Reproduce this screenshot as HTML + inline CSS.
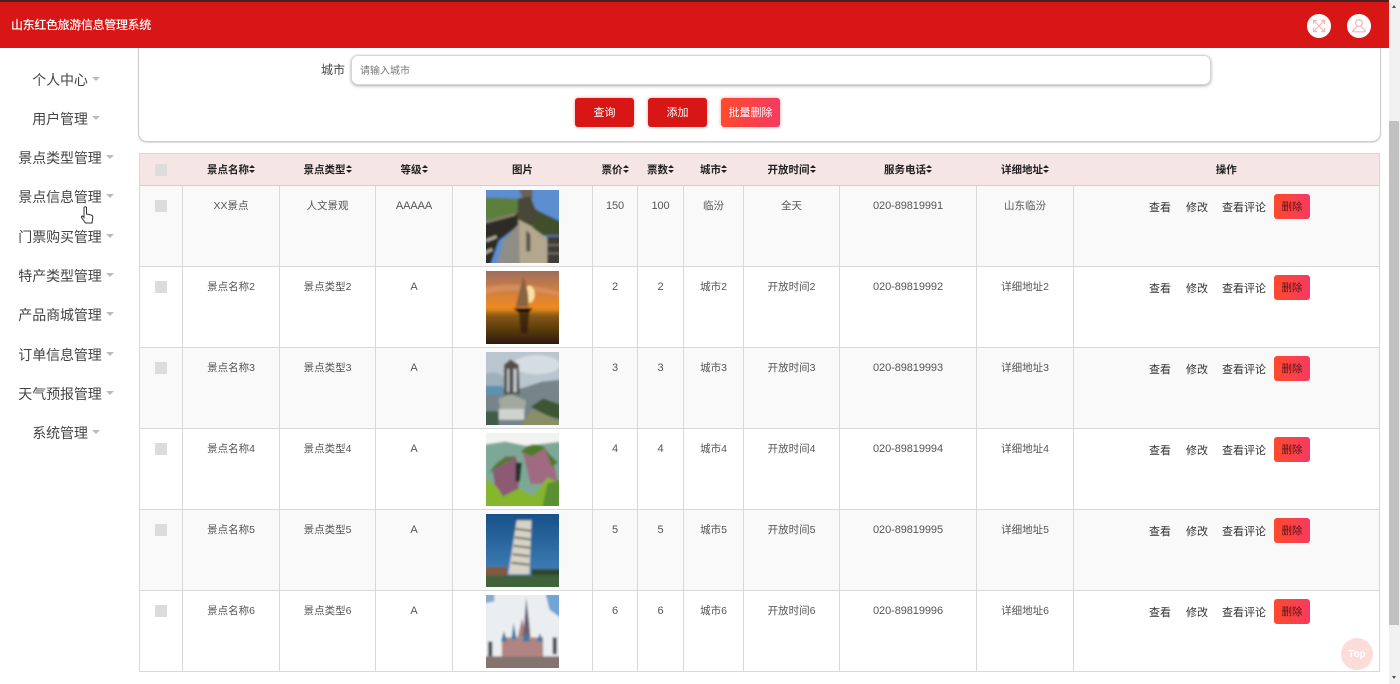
<!DOCTYPE html>
<html lang="zh-CN"><head><meta charset="utf-8"><title>山东红色旅游信息管理系统</title>
<style>
*{box-sizing:border-box}
html,body{margin:0;padding:0;width:1400px;height:684px;overflow:hidden;background:#fff}
body{font-family:"Liberation Sans","Noto Sans CJK SC",sans-serif;color:#333;position:relative}
.top{position:absolute;left:0;top:0;width:1389px;height:48px;background:#d91616;border-top:2px solid #4a2020}
.title{position:absolute;left:11px;top:15px;font-size:12px;line-height:17px;color:#fff;font-weight:500;white-space:nowrap;letter-spacing:-.34px}
.circ{position:absolute;top:12px;width:24px;height:24px;border-radius:50%;background:#fff}
.menu{position:absolute;left:0;top:60.5px;width:132px}
.menu div{height:39.3px;line-height:39.3px;text-align:center;font-size:14px;color:#444;white-space:nowrap;letter-spacing:-.1px}
.menu i{display:inline-block;width:0;height:0;border:4px solid transparent;border-top:4px solid #bbb;border-bottom:0;margin-left:4px;vertical-align:4px}
.search{position:absolute;left:138px;top:36px;width:1243px;height:106px;border:1px solid #ccc;border-top:0;border-radius:0 0 9px 9px;background:#fff;box-shadow:0 1px 1px #ddd}
.lbl{position:absolute;left:321px;top:62px;font-size:12px;line-height:17px;color:#444}
.inp{position:absolute;left:351px;top:55px;width:860px;height:30px;border:1px solid #d5d5d5;border-radius:7px;box-shadow:0 1px 3px #aaa;font-size:10px;line-height:31px;color:#777;padding-left:8px;background:#fff}
.btn{position:absolute;top:98px;width:59px;height:29px;border-radius:3px;background:#d91616;color:#fff;font-size:11px;line-height:30px;text-align:center;box-shadow:0 0 3px #e99}
.btn.g{background:linear-gradient(90deg,#ff4a2c,#f53a62)}
table{position:absolute;left:139px;top:153px;width:1241px;border-collapse:collapse;table-layout:fixed;font-size:10.5px;color:#555;border:1px solid #d8d8d8}
th{height:32px;background:#f6e5e5;font-size:10.5px;font-weight:700;color:#222;padding:0;text-align:center;border-bottom:1px solid #d0d0d0;white-space:nowrap}
td{height:81px;padding:12px 0 0;vertical-align:top;text-align:center;border:1px solid #d8d8d8;line-height:17px;white-space:nowrap}
td.n{font-size:11px;letter-spacing:-.08px}
tr.o td{background:#f9f9f9}
td.p{padding:4px 0 0}
td.p svg{display:block;margin:0 auto}
td.a{position:relative;padding:0}
.a span{position:absolute;top:14px;font-size:11px;line-height:17px;color:#333}
.a b{position:absolute;left:200px;top:8px;width:36px;height:25px;border-radius:3px;background:linear-gradient(90deg,#ff4a2c,#f53a62);font-weight:400;font-size:10.5px;line-height:27px;color:#5a1414}
.cb{display:block;width:12px;height:12px;background:#dcdcdc;margin:0 auto}
.s{display:inline-block;width:6px;height:8px;margin-left:0;vertical-align:-1px;position:relative}
.s:before,.s:after{content:"";position:absolute;left:0;border:3px solid transparent}
.s:before{top:-1px;border-bottom:3.500px solid #222;border-top:0}
.s:after{top:4px;border-top:3.500px solid #222;border-bottom:0}
.sb{position:absolute;left:1389px;top:0;width:11px;height:684px;background:#f1f1f1}
.sb .th{position:absolute;left:0;top:121px;width:10px;height:504px;background:#c1c1c1}
.sb .u,.sb .d{position:absolute;left:3px;border:2.5px solid transparent}
.sb .u{top:5px;border-bottom:3px solid #505050;border-top:0}
.sb .d{top:676px;border-top:3px solid #505050;border-bottom:0}
.topb{position:absolute;left:1341px;top:638px;width:32px;height:32px;border-radius:50%;background:#fcdcd8;color:#fff;font-size:10px;font-weight:700;text-align:center;line-height:33px}
</style></head><body>
<svg width="0" height="0" style="position:absolute"><defs><filter id="bl" x="0" y="0" width="100%" height="100%"><feGaussianBlur stdDeviation="1"/></filter>
<linearGradient id="a" x1="0" y1="0" x2="0" y2="1"><stop offset="0" stop-color="#9a6c5e"/><stop offset=".25" stop-color="#c97d48"/><stop offset=".5" stop-color="#f08a20"/><stop offset=".53" stop-color="#d9861c"/><stop offset=".6" stop-color="#8a5a14"/><stop offset="1" stop-color="#241708"/></linearGradient>
<linearGradient id="b" x1="0" y1="0" x2="0" y2="1"><stop offset="0" stop-color="#174f86"/><stop offset=".8" stop-color="#3f7fb8"/></linearGradient></defs></svg>
<div class="search"></div>
<div class="top"><div class="title">山东红色旅游信息管理系统</div>
<div class="circ" style="left:1307px"><svg width="24" height="24" viewBox="0 0 24 24" fill="none" stroke="#f3b5b5" stroke-width="1.2"><path d="M7 7l10 10M17 7L7 17"/><path d="M6.500 10V6.500H10M14 6.500h3.500V10M17.500 14v3.500H14M10 17.500H6.500V14"/></svg></div>
<div class="circ" style="left:1347px"><svg width="24" height="24" viewBox="0 0 24 24" fill="none" stroke="#f3b5b5" stroke-width="1.2"><circle cx="12" cy="9" r="3.4"/><path d="M10 12.500L6 16.500q-.8 1.300.6 1.300h10.800q1.400 0 .6-1.300L14 12.500"/></svg></div>
</div>
<div class="menu"><div>个人中心<i></i></div><div>用户管理<i></i></div><div>景点类型管理<i></i></div><div>景点信息管理<i></i></div><div>门票购买管理<i></i></div><div>特产类型管理<i></i></div><div>产品商城管理<i></i></div><div>订单信息管理<i></i></div><div>天气预报管理<i></i></div><div>系统管理<i></i></div></div>
<svg style="position:absolute;left:79px;top:205px" width="16" height="22" viewBox="0 0 16 22" fill="#fff" stroke="#333" stroke-width="1"><path d="M5 2.500q1.500-1.500 2.500 0V9l4.500 1q2 .5 1.800 2.500L13 18H6.500L2.500 12.500q-.5-1.500 1-1.500L5 12.500z"/></svg>
<div class="lbl">城市</div>
<div class="inp">请输入城市</div>
<div class="btn" style="left:575px">查询</div><div class="btn" style="left:648px">添加</div><div class="btn g" style="left:721px">批量删除</div>
<table><colgroup><col style="width:43px"><col style="width:97px"><col style="width:96px"><col style="width:77px"><col style="width:140px"><col style="width:45px"><col style="width:46px"><col style="width:60px"><col style="width:96px"><col style="width:137px"><col style="width:97px"><col></colgroup>
<thead><tr><th><span class="cb"></span></th><th>景点名称<span class="s"></span></th><th>景点类型<span class="s"></span></th><th>等级<span class="s"></span></th><th>图片</th><th>票价<span class="s"></span></th><th>票数<span class="s"></span></th><th>城市<span class="s"></span></th><th>开放时间<span class="s"></span></th><th>服务电话<span class="s"></span></th><th>详细地址<span class="s"></span></th><th>操作</th></tr></thead>
<tbody>
<tr class="o"><td style="padding-top:14px"><span class="cb"></span></td><td>XX景点</td><td>人文景观</td><td class="n">AAAAA</td><td class="p"><svg width="73" height="73" viewBox="2 2 69 69"><g filter="url(#bl)"><rect width="73" height="73" fill="#5b8ed0"/><path d="M0 9L30 10 50 20 50 40 0 30z" fill="#5d7f3c"/><path d="M44 18L60 26 73 32V45H48z" fill="#3f4f2c"/><path d="M32 0H46V10L38 12z" fill="#6a6456"/><path d="M32 10L44 8 50 24 46 36 32 30z" fill="#4a4638"/><path d="M0 32L32 24V36L14 50 6 73H0z" fill="#2e2b26"/><path d="M0 33L30 25" stroke="#8a8470" stroke-width="2"/><path d="M2 50L12 46M0 62L8 58" stroke="#a8a496" stroke-width="3"/><path d="M12 73L18 50 33 34 36 73z" fill="#8f8d88"/><path d="M33 30L44 36 60 48V73H34z" fill="#b3a88e"/><path d="M40 40L44 44V60H40z" fill="#5a5448"/><path d="M60 46H73V73H60z" fill="#3f3b35"/><path d="M60 54H73M60 62H73" stroke="#7c776a" stroke-width="1.500"/></g></svg></td><td class="n">150</td><td class="n">100</td><td>临汾</td><td>全天</td><td class="n">020-89819991</td><td>山东临汾</td><td class="a"><span style="left:75px">查看</span><span style="left:112px">修改</span><span style="left:148px">查看评论</span><b>删除</b></td></tr>
<tr><td style="padding-top:14px"><span class="cb"></span></td><td>景点名称2</td><td>景点类型2</td><td class="n">A</td><td class="p"><svg width="73" height="73" viewBox="2 2 69 69"><g filter="url(#bl)"><rect width="73" height="73" fill="url(#a)"/><path d="M0 18Q30 10 73 22V26Q30 16 0 24z" fill="#e0a070" opacity=".5"/><ellipse cx="43" cy="24" rx="5" ry="8" fill="#ffe0a0"/><path d="M37 7L30 36H42Q43 20 37 7z" fill="#8a6440"/><path d="M28 37H46L43 41H32z" fill="#120c06"/><path d="M33 41h10l-2 20h-6z" fill="#2a1a0a" opacity=".7"/></g></svg></td><td class="n">2</td><td class="n">2</td><td>城市2</td><td>开放时间2</td><td class="n">020-89819992</td><td>详细地址2</td><td class="a"><span style="left:75px">查看</span><span style="left:112px">修改</span><span style="left:148px">查看评论</span><b>删除</b></td></tr>
<tr class="o"><td style="padding-top:14px"><span class="cb"></span></td><td>景点名称3</td><td>景点类型3</td><td class="n">A</td><td class="p"><svg width="73" height="73" viewBox="2 2 69 69"><g filter="url(#bl)"><rect width="73" height="73" fill="#b9c6cf"/><ellipse cx="50" cy="14" rx="22" ry="9" fill="#d6dde2"/><path d="M0 24Q10 18 20 26V36H0z" fill="#9fb0ba"/><path d="M0 34L30 38 55 30 73 28V73H0z" fill="#75858a"/><path d="M0 34H18V42H0z" fill="#5a92b0"/><path d="M19 14L25 9 33 14 34 42H19z" fill="#55504a"/><path d="M22 18h2v22h-2zM28 18h3v22h-3z" fill="#c0c8ce"/><path d="M14 46L26 42 40 48 38 60H16z" fill="#a3a8a0"/><path d="M14 56H38V66H14z" fill="#d0d4cf"/><path d="M0 58H14V73H0z" fill="#3f5c4a"/><path d="M34 73L46 56 73 68V73z" fill="#8a8f66"/><path d="M44 54L56 46 73 52V66L60 62z" fill="#3d5530"/></g></svg></td><td class="n">3</td><td class="n">3</td><td>城市3</td><td>开放时间3</td><td class="n">020-89819993</td><td>详细地址3</td><td class="a"><span style="left:75px">查看</span><span style="left:112px">修改</span><span style="left:148px">查看评论</span><b>删除</b></td></tr>
<tr><td style="padding-top:14px"><span class="cb"></span></td><td>景点名称4</td><td>景点类型4</td><td class="n">A</td><td class="p"><svg width="73" height="73" viewBox="2 2 69 69"><g filter="url(#bl)"><rect width="73" height="73" fill="#f2f4f2"/><rect y="55" width="73" height="18" fill="#86b52e"/><path d="M0 13L20 10 40 14 73 10V60H0z" fill="#7da898"/><path d="M8 36L20 24H30L34 36 32 62H12z" fill="#8c5a72"/><path d="M36 18L42 16H58L66 28 70 50H44z" fill="#a06a80"/><path d="M30 30L36 30 34 48H30z" fill="#20302c"/><path d="M5 40Q15 22 30 26L16 32zM35 20Q45 8 58 16L46 24zM58 18L70 30 64 34z" fill="#4f7a28"/><path d="M0 73V48Q8 44 18 62L34 54 46 62 60 44 73 50V73z" fill="#86b52e"/><path d="M60 50L73 46V73H55z" fill="#5a9030"/></g></svg></td><td class="n">4</td><td class="n">4</td><td>城市4</td><td>开放时间4</td><td class="n">020-89819994</td><td>详细地址4</td><td class="a"><span style="left:75px">查看</span><span style="left:112px">修改</span><span style="left:148px">查看评论</span><b>删除</b></td></tr>
<tr class="o"><td style="padding-top:14px"><span class="cb"></span></td><td>景点名称5</td><td>景点类型5</td><td class="n">A</td><td class="p"><svg width="73" height="73" viewBox="2 2 69 69"><g filter="url(#bl)"><rect width="73" height="73" fill="url(#b)"/><rect y="60" width="73" height="13" fill="#40623a"/><path d="M0 52H22V60H0z" fill="#7f5a40"/><path d="M45 54H73V60H45z" fill="#2f4a2c"/><path d="M31 8H45L43 59H23z" fill="#d6d3c6"/><path d="M30 16L45 18M29 24L44 26M28 32L44 34M27 40L43 42M26 48L43 50" stroke="#77756a" stroke-width="2"/></g></svg></td><td class="n">5</td><td class="n">5</td><td>城市5</td><td>开放时间5</td><td class="n">020-89819995</td><td>详细地址5</td><td class="a"><span style="left:75px">查看</span><span style="left:112px">修改</span><span style="left:148px">查看评论</span><b>删除</b></td></tr>
<tr><td style="padding-top:14px"><span class="cb"></span></td><td>景点名称6</td><td>景点类型6</td><td class="n">A</td><td class="p"><svg width="73" height="73" viewBox="2 2 69 69"><g filter="url(#bl)"><rect width="73" height="73" fill="#eaeef1"/><path d="M58 0H73V24L62 16z" fill="#6fa4d8"/><path d="M0 0H10V8L0 10z" fill="#88aacc"/><path d="M17 42H56V62H17z" fill="#b08480"/><path d="M32 42L36 24 40 42z" fill="#a88080"/><path d="M38 30L40 4 43 30 44 42H37z" fill="#6a5f70"/><path d="M16 46l3-10 3 10zM26 44l2-16 3 16zM50 46l3-8 3 8zM36 46l4-8 4 8z" fill="#3a7aa8"/><path d="M4 46h4v14H4zM65 42h4v16h-4z" fill="#4a4f50"/><path d="M0 60H73V73H0z" fill="#857370"/></g></svg></td><td class="n">6</td><td class="n">6</td><td>城市6</td><td>开放时间6</td><td class="n">020-89819996</td><td>详细地址6</td><td class="a"><span style="left:75px">查看</span><span style="left:112px">修改</span><span style="left:148px">查看评论</span><b>删除</b></td></tr>
</tbody></table>
<div class="topb">Top</div>
<div class="sb"><div class="u"></div><div class="th"></div><div class="d"></div></div>
</body></html>
